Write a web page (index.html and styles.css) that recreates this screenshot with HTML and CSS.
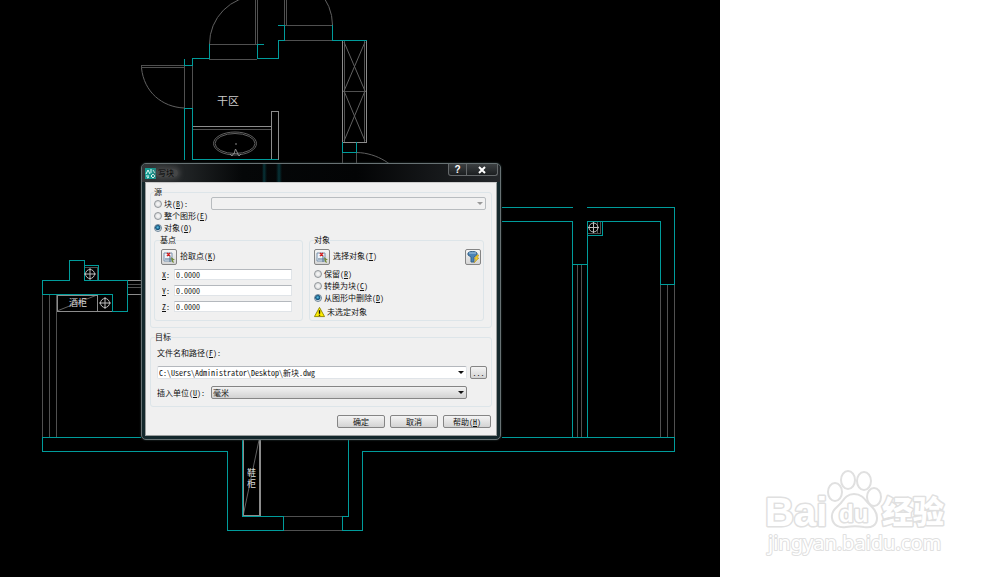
FILE: index.html
```html
<!DOCTYPE html>
<html lang="zh-CN">
<head>
    <meta charset="UTF-8">
    <title>写块</title>
    <link rel="stylesheet" href="styles.css">
</head>
<body>
<main class="canvas">
    <svg class="drawing" viewBox="0 0 720 577" preserveAspectRatio="xMinYMin meet">
        <!-- thin lines -->
        <g class="thin">
            <path d="M209.500 44.500H257.500M255.500 0V44M257.500 0V44M209 59.500H257M284.500 0V25M286.500 0V25M284 25.500H332M284 40.500H332"/>
            <path d="M141.500 68V65.500H184M141 67.500H184M184.500 65V108M192.500 65V108M192 129.500H271"/>
            <path d="M342.500 152V163M356.500 152V163M344.500 41V142M364.500 41V142M343 91.500H366"/>
            <path d="M49.500 294V437M56.500 294V437M42.500 294V437M127 284.500H141M127 287.500H141"/>
            <path d="M84 267.500H97.500V280M577.500 264V437M581.500 264V437M660.500 284V437M667.500 284V437M674.500 284V437"/>
            <path d="M283 516.500H342M283 530.500H342M588 233.500H600.500V222M597.500 222V233"/>
        </g>
        <g class="curve">
            <path d="M209.500 44A48 48 0 0 1 257 -4M332.500 25A48 48 0 0 0 284 -23M141.500 68C144 92 162 107 184 108M357 152.500C377 153 396 165 403 180"/>
            <path d="M344 42L365 91L344 141M365 42L344 91L365 141"/>
            <path d="M57 311L97 295M243.500 514L259 440"/>
            <ellipse cx="235" cy="143.500" rx="21.500" ry="11.500"/>
            <ellipse cx="235" cy="143.500" rx="20" ry="10"/>
            <path class="tap" d="M234 154L235.500 149L238 154M230 154L232 156L234 153M237 153L239 156L241 154M235 144H237"/>
        </g>
        <g class="light">
            <path d="M192 126.500H271M271.500 160V111.500H278.500V160M342.500 41V142.500H366.500V41"/>
            <path d="M57.500 295.500H97.500V311.500H57.500ZM97 311.500H112M127 280.500H141M127 294.500H141"/>
            <path d="M243.500 439V515.500H260.500V439M259.500 439V515"/>
        </g>
        <!-- walls -->
        <g class="wall">
            <path d="M209.500 44V59M257.500 59V44.500H264M192 58.500H209M257 58.500H278.500V40.500H284.500V25.500H278M332.500 25V40.500H367"/>
            <path d="M184.500 59V65.500H192.500V59M184.500 160V108.500H192.500V159.500H278M342.500 142V152.500H356.500V142"/>
            <path d="M42.500 280.500H69.500V260.500H84.500V280.500H127.500V311.500H112.500V294.500H42.500ZM84 265.500H98.500V280"/>
            <path d="M141 437.500H42.500V451.500H227.500V530.500H283.500V516.500H242.500V439M348.500 439V516.500H342.500V530.500H362.500V451.500H674.500V437.500H502"/>
            <path d="M502 207.500H573M587 207.500H674.500V284.500H660.500V221.500H587.500V437M502 221.500H572.500V437M572 264.500H587M587 235.500H602.500V221"/>
        </g>
        <g class="column">
            <circle cx="90" cy="274" r="4.500"/><path d="M84 274H96M90 268V280"/>
            <circle cx="105" cy="303" r="4.500"/><path d="M99 303H111M105 297V309"/>
            <circle cx="593.500" cy="227.500" r="4.500"/><path d="M588 227.500H599M593.500 222V233"/>
        </g>
        <text class="room" x="217" y="105">干区</text>
        <text class="furniture" x="69" y="306">酒柜</text>
        <text class="furniture" x="247" y="476">鞋</text>
        <text class="furniture" x="247" y="487">柜</text>
    </svg>

    <form class="dialog">
        <header class="titlebar">
            <svg class="app-icon" viewBox="0 0 11 11">
                <path d="M0 0H11V11H0Z" fill="#159a91"/>
                <path d="M1 6L3 2L5 6M1 8H4M6 1V5M8 2L10 5M6 8L8 6L10 8L8 10ZM2 10L4 9" stroke="#e9fffb" fill="none"/>
            </svg>
            <h1 class="title">写块</h1>
            <div class="window-buttons">
                <button type="button" class="win-btn" aria-label="帮助">?</button>
                <button type="button" class="win-btn win-close" aria-label="关闭">
                    <svg viewBox="0 0 8 8"><path d="M1 1L7 7M7 1L1 7"/></svg>
                </button>
            </div>
        </header>
        <div class="content">
            <fieldset class="group source">
                <legend>源</legend>
                <div class="row block-row">
                    <label class="option"><input type="radio" name="source">块(<u>B</u>):</label>
                    <span class="dropdown disabled"><select aria-label="块" disabled><option></option></select></span>
                </div>
                <label class="option"><input type="radio" name="source">整个图形(<u>E</u>)</label>
                <label class="option"><input type="radio" name="source" checked>对象(<u>O</u>)</label>

                <div class="columns">
                    <fieldset class="group base">
                        <legend>基点</legend>
                        <div class="row tools">
                            <button type="button" class="tool" id="pick">
                                <svg viewBox="0 0 12 12"><path d="M1 2H9V10H1Z" fill="#eef4fa" stroke="#7892ad"/><path d="M4 2L7 5M7 2L4 5" stroke="#d02020" stroke-width="1.500"/><path d="M7 5V11M2 8H10" stroke="#52718e"/><path d="M8 6L12 9L10 9L11 12L9 11Z" fill="#758b38"/></svg>
                            </button>
                            <label for="pick">拾取点(<u>K</u>)</label>
                        </div>
                        <div class="coords">
                            <label for="x"><u>X</u>:</label><input class="field" id="x" value="0.0000">
                            <label for="y"><u>Y</u>:</label><input class="field" id="y" value="0.0000">
                            <label for="z"><u>Z</u>:</label><input class="field" id="z" value="0.0000">
                        </div>
                    </fieldset>
                    <fieldset class="group objects">
                        <legend>对象</legend>
                        <div class="row tools">
                            <button type="button" class="tool" id="select">
                                <svg viewBox="0 0 12 12"><path d="M1 2H9V10H1Z" fill="#eef4fa" stroke="#7892ad"/><path d="M4 2L7 5M7 2L4 5" stroke="#d02020" stroke-width="1.500"/><path d="M7 5V11M2 8H10" stroke="#52718e"/><path d="M8 6L12 9L10 9L11 12L9 11Z" fill="#758b38"/></svg>
                            </button>
                            <label for="select">选择对象(<u>T</u>)</label>
                            <button type="button" class="tool filter" aria-label="快速选择">
                                <svg viewBox="0 0 12 12"><path d="M1 2C2 0 9 0 10 2V4L7 6V11H4V6L1 4Z" fill="#4b83b5" stroke="#376287"/><path d="M2 2H9" stroke="#a9cbe6"/><path d="M10 4L7 8H9L7 12L12 7H10L12 4Z" fill="#f3cf2b" stroke="#a88a20" stroke-width=".5"/></svg>
                            </button>
                        </div>
                        <label class="option"><input type="radio" name="objects">保留(<u>R</u>)</label>
                        <label class="option"><input type="radio" name="objects">转换为块(<u>C</u>)</label>
                        <label class="option"><input type="radio" name="objects" checked>从图形中删除(<u>D</u>)</label>
                        <p class="warning">
                            <svg viewBox="0 0 12 12"><path d="M6 1L11.500 11H.5Z" fill="#ffed00" stroke="#8c8400" stroke-linejoin="round"/><path d="M6 4V8M6 9V10" stroke="#111" stroke-width="1.500"/></svg>
                            未选定对象
                        </p>
                    </fieldset>
                </div>
            </fieldset>

            <fieldset class="group target">
                <legend>目标</legend>
                <label class="path-label" for="path">文件名和路径(<u>F</u>):</label>
                <div class="row path-row">
                    <span class="dropdown editable"><input id="path" value="C:\Users\Administrator\Desktop\新块.dwg"></span>
                    <button type="button" class="btn browse">...</button>
                </div>
                <div class="row unit-row">
                    <label for="unit">插入单位(<u>U</u>):</label>
                    <span class="dropdown"><select id="unit"><option>毫米</option></select></span>
                </div>
            </fieldset>

            <footer class="actions">
                <button type="button" class="btn">确定</button>
                <button type="button" class="btn">取消</button>
                <button type="button" class="btn">帮助(<u>H</u>)</button>
            </footer>
        </div>
    </form>
</main>
<aside class="side">
    <svg class="watermark" viewBox="0 0 190 95">
        <g class="paw">
            <ellipse cx="74" cy="24" rx="7" ry="9"/>
            <ellipse cx="87" cy="12" rx="7" ry="9"/>
            <ellipse cx="103" cy="13" rx="7" ry="9"/>
            <ellipse cx="113" cy="29" rx="7" ry="9"/>
            <path d="M93 26C86 26 83 31 80 35C75 40 70 43 71 50C72 58 79 60 85 59C91 58 97 58 103 59C110 60 116 58 116 50C116 43 111 39 107 35C103 30 100 26 93 26Z"/>
        </g>
        <text class="logo" x="4" y="58">Bai</text>
        <text class="du" x="78" y="54">du</text>
        <text class="logo-cn" x="121" y="55">经验</text>
        <text class="site" x="7" y="82">jingyan.baidu.com</text>
    </svg>
</aside>
</body>
</html>
```
FILE: styles.css
```css
*{
    box-sizing: border-box;
}
body{
    margin: 0;
    min-height: 100vh;
    display: flex;
    background: #fff;
    color: #111;
    font: 8px/10px "Noto Sans Mono CJK SC", "Noto Sans CJK SC", sans-serif;
}
button, input, select{
    font: inherit;
    color: inherit;
    margin: 0;
}
.canvas{
    position: relative;
    width: 72%;
    background: #000;
    overflow: hidden;
}

/* drawing */
.drawing{
    display: block;
    width: 100%;
}
.drawing path, .drawing circle, .drawing ellipse{
    fill: none;
}
.thin{
    stroke: #505050;
    shape-rendering: crispEdges;
}
.curve{
    stroke: #606060;
}
.tap{
    stroke: #888;
}
.light{
    stroke: #8c8c8c;
    shape-rendering: crispEdges;
}
.wall{
    stroke: #009c9b;
    shape-rendering: crispEdges;
}
.column{
    stroke: #bbb;
}
.room{
    font-size: 11px;
    fill: #ccc;
}
.furniture{
    font-size: 9px;
    fill: #ddd;
}

/* dialog window */
.dialog{
    position: absolute;
    left: 141px;
    top: 163px;
    width: 360px;
    padding: 0 3px 3px;
    border: 1px solid #687274;
    border-radius: 5px;
    background: #14282c;
    box-shadow: 0 0 2px #344;
}
.titlebar{
    display: flex;
    align-items: center;
    height: 18px;
    margin: 0 -3px;
    padding-left: 3px;
    border-radius: 4px 4px 0 0;
    background:
        linear-gradient(90deg, transparent 120px, #073338 122px, transparent 125px, transparent 134px, #073338 137px, transparent 140px),
        linear-gradient(90deg, #34383a, #050708 28%, #030405 60%, #24272a);
}
.app-icon{
    width: 11px;
    height: 11px;
}
.title{
    margin: 0;
    padding: 0 4px 0 2px;
    font-size: 8px;
    line-height: 8px;
    font-weight: normal;
    color: #050505;
    border-radius: 6px;
    background: #555a;
    box-shadow: 0 0 5px 2px #555a;
}
.window-buttons{
    display: flex;
    align-self: flex-start;
    margin-left: auto;
    margin-right: 2px;
}
.win-btn{
    width: 19px;
    height: 12px;
    padding: 0;
    border: 1px solid #65696b;
    border-top: 0;
    border-radius: 0 0 0 3px;
    background: linear-gradient(#3c4042, #1c1f21);
    color: #fff;
    font: bold 10px/10px "Liberation Sans", sans-serif;
}
.win-close{
    width: 31px;
    border-left: 0;
    border-radius: 0 0 3px 0;
}
.win-close svg{
    display: block;
    width: 8px;
    height: 8px;
    margin: 0 auto;
    fill: none;
    stroke: #fff;
    stroke-width: 2;
}
.content{
    padding: 4px 4px 7px;
    border: 1px solid #9a9d9d;
    border-top: 1px solid #ccc;
    background: #f0f0f0;
}

/* groups */
.group{
    min-width: 0;
    margin: 0;
    border: 1px solid #dde5e9;
    border-radius: 3px;
}
.group legend{
    height: 10px;
    padding: 0;
}
.source{
    padding: 0 5px 6px 3px;
}
.target{
    margin-top: 4px;
    padding: 6px 4px 7px;
}
.row{
    display: flex;
    align-items: center;
}
.option{
    display: flex;
    align-items: center;
    height: 12px;
    white-space: pre;
}
.option input{
    appearance: none;
    width: 8px;
    height: 8px;
    margin-right: 2px;
    border: 1px solid #92979b;
    border-radius: 50%;
    background: radial-gradient(#f4f4f4 20%, #c8cccf);
}
.option input:checked{
    border-color: #71879a;
    background: radial-gradient(circle at 45% 40%, #5ec4ec, #105078 45%, #d6e1e8 65%);
}
.block-row{
    height: 13px;
}
.block-row .option{
    width: 57px;
}
.columns{
    display: grid;
    grid-template-columns: 149px 1fr;
    gap: 6px;
    margin: 1px 2px 0 0;
}
.base{
    padding: 4px 10px 8px 5px;
}
.base .tools{
    padding-left: 1px;
}
.objects{
    padding: 4px 2px 2px 4px;
}
.tools{
    gap: 3px;
    height: 16px;
}
.tool{
    width: 16px;
    height: 16px;
    padding: 1px;
    border: 1px solid #858585;
    border-radius: 2px;
    background: linear-gradient(#f5f5f5, #d5d5d5);
}
.tool svg{
    display: block;
    width: 12px;
    height: 12px;
}
.tools label{
    margin-top: -3px;
}
.filter{
    margin-left: auto;
}
.tools + .option{
    margin-top: 3px;
}
.coords{
    display: grid;
    grid-template-columns: 14px 1fr;
    gap: 5px 0;
    align-items: center;
    margin-top: 4px;
    line-height: 11px;
}
.coords label{
    padding-left: 2px;
}
.field{
    width: 100%;
    min-width: 0;
    height: 11px;
    padding: 0 1px;
    border: 1px solid #e0e4e8;
    border-top-color: #b4b8bd;
    background: #fff;
}
.warning{
    display: flex;
    align-items: center;
    gap: 2px;
    height: 12px;
    margin: 2px 0 0;
}
.warning svg{
    width: 11px;
    height: 12px;
}

/* drop-downs */
.dropdown{
    position: relative;
    flex: 1;
    height: 13px;
}
.dropdown::after{
    content: "";
    position: absolute;
    right: 3px;
    top: 5px;
    border: 3px solid transparent;
    border-top-color: #111;
    border-bottom: 0;
    pointer-events: none;
}
.dropdown select, .dropdown input{
    appearance: none;
    display: block;
    width: 100%;
    height: 13px;
    padding: 0 12px 0 1px;
    border: 1px solid #858585;
    border-radius: 2px;
    background: linear-gradient(#f2f2f2, #d2d2d2);
    line-height: 11px;
}
.dropdown input{
    border-color: #b4b8bd #e0e4e8 #e0e4e8;
    background: #fff;
}
.dropdown.disabled select{
    border-color: #b8bcbf;
    background: #f1f1f1;
    opacity: 1;
}
.dropdown.disabled::after{
    border-top-color: #999;
}
.path-label{
    display: block;
    padding-left: 2px;
}
.path-row{
    gap: 3px;
    margin-top: 8px;
    padding-left: 2px;
}
.unit-row{
    margin-top: 7px;
    padding: 0 20px 0 2px;
}
.unit-row label{
    width: 54px;
}
.btn{
    width: 48px;
    height: 13px;
    padding: 0;
    border: 1px solid #858585;
    border-radius: 2px;
    background: linear-gradient(#f4f4f4, #d3d3d3);
    line-height: 11px;
}
.browse{
    width: 17px;
}
.actions{
    display: flex;
    justify-content: flex-end;
    gap: 5px;
    margin-top: 8px;
    padding-right: 1px;
}

/* watermark */
.side{
    flex: 1;
    display: flex;
    align-items: flex-end;
    padding: 0 41px 14px;
}
.watermark{
    width: 190px;
    height: 95px;
    flex-shrink: 0;
    fill: #fff;
    stroke: #e0e0e0;
    stroke-width: 2;
    stroke-linejoin: round;
}
.watermark text{
    paint-order: stroke;
    font-family: "Liberation Sans", sans-serif;
    font-weight: bold;
    stroke-width: 3;
}
.watermark .logo{
    font-size: 40px;
}
.watermark .du{
    font-size: 24px;
}
.watermark .logo-cn{
    font-family: "Noto Sans CJK SC", sans-serif;
    font-size: 31px;
    font-weight: 900;
}
.watermark .site{
    font-family: "Noto Sans", sans-serif;
    font-size: 20px;
    font-weight: normal;
    stroke-width: 2;
}
```
